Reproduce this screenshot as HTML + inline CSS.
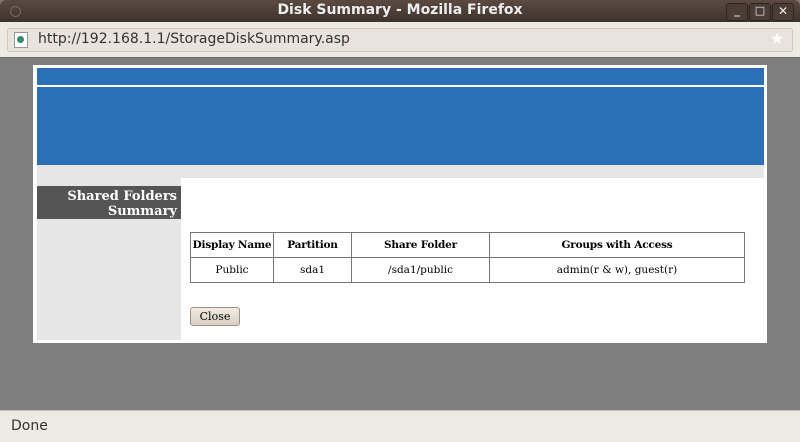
<!DOCTYPE html><html><head><style>
body{margin:0;width:800px;height:441px;overflow:hidden;position:relative;font-family:"DejaVu Sans","Liberation Sans",sans-serif;background:#7e7e7e}
.a{position:absolute}
td,th{border:1px solid #777;font-family:"DejaVu Serif","Liberation Serif",serif;font-size:10.5px;text-align:center;padding:0;height:24px;white-space:nowrap}
th{font-weight:bold;letter-spacing:-0.2px}
</style></head><body>
<div class="a" style="left:0;top:0;width:800px;height:22px;background:linear-gradient(#5b4a40,#3e332c);border-radius:6px 6px 0 0"></div>
<div class="a" style="left:10px;top:6px;width:9px;height:9px;border-radius:50%;border:1px solid #7a6a60"></div>
<div class="a" style="left:0;top:2px;width:800px;text-align:center;color:#eee;font-weight:bold;font-size:14px">Disk Summary - Mozilla Firefox</div>
<div class="a" style="left:726px;top:3px;width:20px;height:16px;border:1px solid #2e2520;border-radius:3px;background:#4a3d35;color:#eee;font-size:11px;text-align:center;font-weight:bold">_</div>
<div class="a" style="left:749px;top:3px;width:20px;height:16px;border:1px solid #2e2520;border-radius:3px;background:#4a3d35;color:#eee;font-size:11px;text-align:center">□</div>
<div class="a" style="left:772px;top:3px;width:20px;height:16px;border:1px solid #2e2520;border-radius:3px;background:#4a3d35;color:#eee;font-size:12px;text-align:center;font-weight:bold">✕</div>
<div class="a" style="left:0;top:22px;width:800px;height:35px;background:#ede9e3"></div>
<div class="a" style="left:7px;top:28px;width:784px;height:22px;border:1px solid #d0c9bf;border-radius:3px;background:#e8e3dc"></div>
<div class="a" style="left:14px;top:32px;width:12px;height:14px;border:1px solid #999;background:#fff"></div>
<div class="a" style="left:17px;top:36px;width:7px;height:7px;border-radius:50%;background:#3a8a6a"></div>
<div class="a" style="left:38px;top:31px;font-size:14px;color:#333">http://192.168.1.1/StorageDiskSummary.asp</div>
<div class="a" style="left:770px;top:29px;color:#fff;font-size:16px">★</div>
<div class="a" style="left:0;top:57px;width:800px;height:1px;background:#6a6a6a"></div>
<div class="a" style="left:33px;top:65px;width:734px;height:278px;background:#fff"></div>
<div class="a" style="left:37px;top:68px;width:727px;height:17px;background:#2b6fb7"></div>
<div class="a" style="left:37px;top:87px;width:727px;height:78px;background:#2b6fb7"></div>
<div class="a" style="left:37px;top:165px;width:727px;height:13px;background:#e6e6e6"></div>
<div class="a" style="left:37px;top:178px;width:144px;height:162px;background:#e6e6e6"></div>
<div class="a" style="left:37px;top:186px;width:144px;height:33px;background:#555;color:#fff;font-family:'DejaVu Serif',serif;font-weight:bold;font-size:13px;text-align:right;line-height:15px;box-sizing:border-box;padding:3px 4px 0 0">Shared Folders<br>Summary</div>
<table class="a" style="left:190px;top:232px;width:555px;border-collapse:collapse">
<tr><th style="width:82px">Display Name</th><th style="width:77px">Partition</th><th style="width:137px">Share Folder</th><th>Groups with Access</th></tr>
<tr><td>Public</td><td>sda1</td><td>/sda1/public</td><td>admin(r &amp; w), guest(r)</td></tr></table>
<div class="a" style="left:190px;top:307px;width:48px;height:17px;border:1px solid #a09080;border-radius:3px;background:linear-gradient(#f2ece4,#d8cec2);font-family:'DejaVu Serif',serif;font-size:11px;text-align:center;line-height:17px">Close</div>
<div class="a" style="left:0;top:410px;width:800px;height:31px;background:#ede9e3;border-top:1px solid #c8c0b5"></div>
<div class="a" style="left:11px;top:418px;font-size:14px;color:#333">Done</div>
</body></html>
